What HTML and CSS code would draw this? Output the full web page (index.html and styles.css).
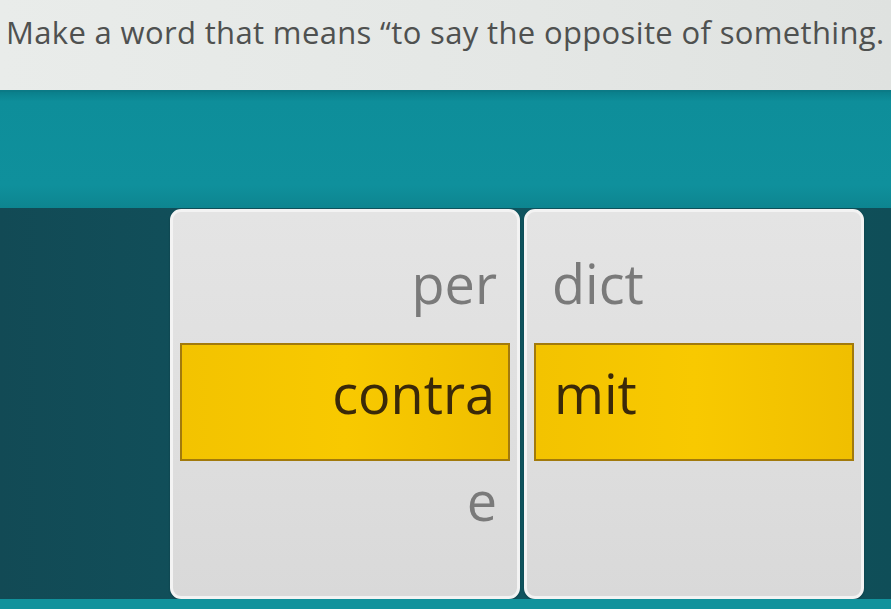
FILE: index.html
```html
<!DOCTYPE html>
<html lang="en">
<head>
<meta charset="utf-8">
<title>Word builder</title>
<link rel="stylesheet" href="styles.css">
</head>
<body>
<div class="page">
  <header class="prompt">
    <h1 class="prompt-text">Make a word that means “to say the opposite of something.</h1>
  </header>
  <div class="band"></div>
  <main class="board">
    <div class="cards">
      <div class="card card-left">
        <div class="cell cell-top"><span class="word">per</span></div>
        <div class="cell cell-pick"><span class="word">contra</span></div>
        <div class="cell cell-bottom"><span class="word">e</span></div>
      </div>
      <div class="card card-right">
        <div class="cell cell-top"><span class="word">dict</span></div>
        <div class="cell cell-pick"><span class="word">mit</span></div>
        <div class="cell cell-bottom"></div>
      </div>
    </div>
  </main>
  <div class="footer-band"></div>
</div>
</body>
</html>
```

FILE: styles.css
```css
* { box-sizing: border-box; }
html, body { margin: 0; padding: 0; }
body {
  width: 891px;
  height: 609px;
  overflow: hidden;
  font-family: "Open Sans", "Noto Sans", sans-serif;
  background: #104e58;
}
.page {
  display: flex;
  flex-direction: column;
  height: 609px;
}
.prompt {
  height: 91px;
  background: linear-gradient(90deg, #e9ecea 0%, #e4e7e5 60%, #dfe2e0 100%);
  padding: 12px 0 0 6px;
  overflow: hidden;
  white-space: nowrap;
}
.prompt-text {
  margin: 0;
  font-weight: 400;
  font-size: 31px;
  line-height: 40px;
  letter-spacing: 0.35px;
  color: #4f5150;
}
.band {
  height: 119px;
  background: linear-gradient(180deg, #0a7f8b 0%, #0e8e9a 8%, #0f909c 80%, #0d8590 100%);
  border-top: 2px solid #0b7a86;
}
.board {
  flex: 1;
  background: linear-gradient(90deg, #124a55 0%, #0f5560 50%, #0f4e58 100%);
  padding: 0 0 0 170px;
}
.cards {
  display: flex;
  gap: 4px;
  padding-top: 1px;
}
.card {
  height: 390px;
  border: 3px solid #f3f3f3;
  border-radius: 11px;
  background: linear-gradient(180deg, #e4e4e4 0%, #dfdfdf 50%, #d9d9d9 100%);
  display: flex;
  flex-direction: column;
  padding: 0 7px;
  box-shadow: 0 1px 2px rgba(0,0,0,0.25);
}
.card-left { width: 350px; }
.card-right { width: 340px; }
.cell {
  display: flex;
  padding: 0 13px;
}
.card-left .cell { justify-content: flex-end; }
.card-right .cell { justify-content: flex-start; padding-left: 18px; }
.cell-top {
  height: 131px;
  padding-top: 40px;
}
.cell-pick {
  height: 118px;
  background: linear-gradient(90deg, #f3c300 0%, #f8c900 50%, #f0bf00 100%);
  border: 2px solid #a27a0c;
  padding-top: 17px;
}
.cell-bottom {
  flex: 1;
  padding-top: 8px;
}
.word {
  font-size: 54px;
  line-height: 62px;
  color: #7a7a7a;
}
.cell-pick .word { color: #3a2909; }
.footer-band {
  height: 10px;
  background: #11929c;
}
```
